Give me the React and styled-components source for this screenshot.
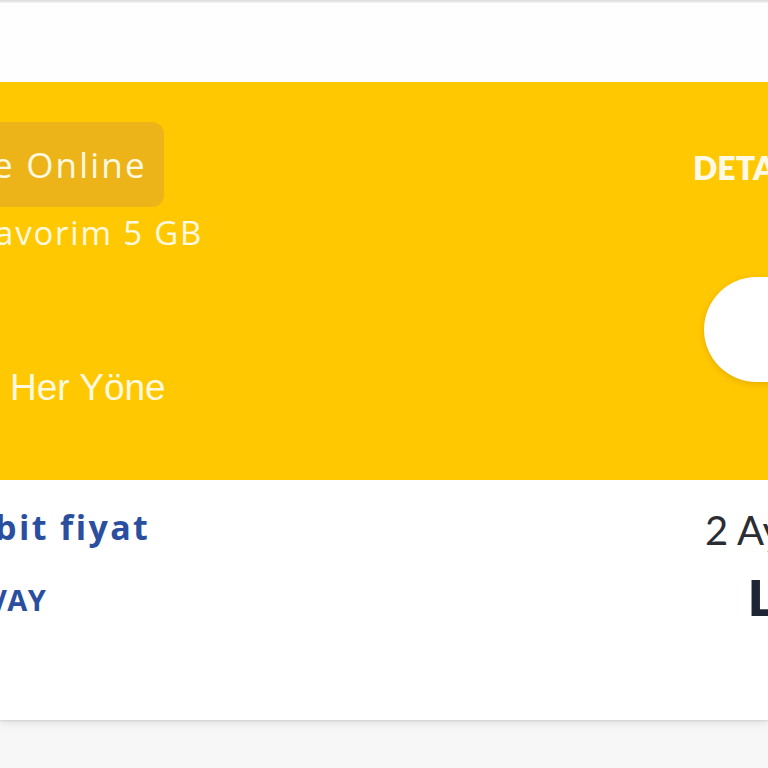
import React from "react";
import styled, { createGlobalStyle } from "styled-components";

const Global = createGlobalStyle`
  html, body { margin: 0; padding: 0; background: #f7f7f8; }
  body { font-family: "Open Sans", Lato, sans-serif; overflow: hidden; }
`;

const Page = styled.div`
  width: 768px;
  height: 768px;
  overflow: hidden;
  background: #f7f7f8;
  display: flex;
  flex-direction: column;
`;

const TopEdge = styled.div`
  height: 3px;
  background: linear-gradient(#dcdcdc, #f2f2f2);
`;

const TopSpace = styled.div`
  height: 79px;
  background: #fefefe;
`;

const Card = styled.section`
  background: #fff;
  box-shadow: 0 4px 8px rgba(0, 0, 0, 0.08), 0 1px 2px rgba(0, 0, 0, 0.1);
  display: flex;
  flex-direction: column;
`;

const Banner = styled.div`
  height: 398px;
  background: #ffc800;
  display: flex;
  justify-content: space-between;
  box-sizing: border-box;
  padding-top: 40px;
`;

const Column = styled.div`
  display: flex;
  flex-direction: column;
  align-items: flex-start;
  white-space: nowrap;
  width: ${(p) => p.$width || "auto"};
`;

const Pill = styled.div`
  height: 85px;
  margin-left: -30px;
  padding: 0 17px 0 30px;
  box-sizing: border-box;
  display: flex;
  align-items: center;
  background: #ecb419;
  border-radius: 12px;
`;

const CreamText = styled.span`
  color: #fff9e0;
  font-family: ${(p) => (p.$plain ? '"Liberation Sans", Arial, sans-serif' : '"Open Sans", sans-serif')};
  font-weight: ${(p) => (p.$plain ? 400 : 500)};
  font-size: ${(p) => p.$size}px;
  line-height: 1;
  letter-spacing: ${(p) => p.$ls || 0}px;
  margin-left: ${(p) => p.$ml || 0}px;
  margin-top: ${(p) => p.$mt || 0}px;
`;

const DetailLink = styled.span`
  font-family: Lato, sans-serif;
  color: #fff9e6;
  font-size: 32px;
  font-weight: 800;
  line-height: 1;
  margin-top: 30px;
`;

const Toggle = styled.div`
  margin-top: 93px;
  margin-left: 11px;
  width: 140px;
  height: 105px;
  border-radius: 53px;
  background: #fff;
  box-shadow: 0 2px 6px rgba(150, 100, 0, 0.25);
`;

const Footer = styled.div`
  height: 240px;
  display: flex;
  justify-content: space-between;
  box-sizing: border-box;
  padding-top: 30px;
`;

const BlueText = styled.span`
  color: #2b4f9f;
  font-weight: 700;
  font-size: ${(p) => p.$size}px;
  line-height: 1;
  letter-spacing: ${(p) => p.$ls || 0}px;
  margin-left: ${(p) => p.$ml || 0}px;
  margin-top: ${(p) => p.$mt || 0}px;
`;

const DarkText = styled.span`
  font-family: Lato, sans-serif;
  color: ${(p) => (p.$bold ? "#1e2535" : "#2a2d33")};
  font-weight: ${(p) => (p.$bold ? 800 : 400)};
  font-size: ${(p) => p.$size}px;
  line-height: 1;
  margin-left: ${(p) => p.$ml || 0}px;
  margin-top: ${(p) => p.$mt || 0}px;
`;

export default function App() {
  return (
    <Page>
      <Global />
      <TopEdge />
      <TopSpace />
      <Card>
        <Banner>
          <Column>
            <Pill>
              <CreamText $size={35} $ls={2.2} $ml={-7}>
                e Online
              </CreamText>
            </Pill>
            <CreamText $size={33} $ls={1.8} $ml={-5} $mt={9}>
              avorim 5 GB
            </CreamText>
            <CreamText $size={37} $plain $ml={10} $mt={120}>
              Her Yöne
            </CreamText>
          </Column>
          <Column $width="75px">
            <DetailLink>DETAY</DetailLink>
            <Toggle />
          </Column>
        </Banner>
        <Footer>
          <Column>
            <BlueText $size={34} $ls={2.4} $ml={-5}>
              bit fiyat
            </BlueText>
            <BlueText $size={29} $ls={0.5} $ml={-12} $mt={41}>
              VAY
            </BlueText>
          </Column>
          <Column $width="63px">
            <DarkText $size={40}>2 Ay</DarkText>
            <DarkText $bold $size={50} $ml={43} $mt={22}>
              L
            </DarkText>
          </Column>
        </Footer>
      </Card>
    </Page>
  );
}
